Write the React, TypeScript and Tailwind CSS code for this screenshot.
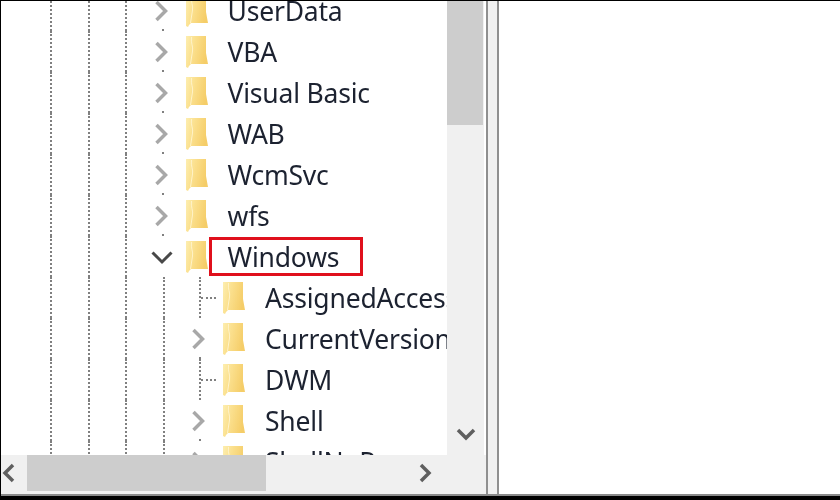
const font = "font-['Noto_Sans','Open_Sans',sans-serif]"

function Folder() {
  return (
    <svg width="24" height="34" viewBox="0 0 24 34" className="-ml-[2px] shrink-0">
      <defs>
        <linearGradient id="folderFill" x1="0" y1="0" x2="1" y2="0.3">
          <stop offset="0" stopColor="#fdeeb0" />
          <stop offset="0.4" stopColor="#fbe08e" />
          <stop offset="1" stopColor="#f5cd68" />
        </linearGradient>
      </defs>
      <path d="M1 1h20v17l2 11H6l-2 2 -1 2-2-1z" fill="url(#folderFill)" />
      <path d="M6.5 2c-1 6 2 10 1 14l-2 13" fill="none" stroke="#fff3c8" strokeWidth="1" />
    </svg>
  )
}

function Chevron({ open }: { open?: boolean }) {
  return (
    <svg width="22" height="22" viewBox="0 0 22 22" className="shrink-0 -translate-x-[1px]">
      {open ? (
        <path d="M1.500 6.500l9.500 9.500 9.500-9.500" fill="none" stroke="#484848" strokeWidth="3" />
      ) : (
        <path d="M5.500 2l9 9-9 9" fill="none" stroke="#a8a8a8" strokeWidth="3.500" />
      )}
    </svg>
  )
}

interface RowProps {
  label: string
  level: 3 | 4
  expander?: "closed" | "open"
  boxed?: boolean
}

function Row({ label, level, expander, boxed }: RowProps) {
  const guides = level === 3 ? [0, 1, 2] : [0, 1, 2, 3]
  return (
    <div className="flex h-[41px] shrink-0 items-stretch">
      <div className="w-[50px] shrink-0" />
      {guides.map((g) => (
        <div key={g} className="w-[37.5px] shrink-0 border-l-2 border-dotted border-[#808080]" />
      ))}
      <div className="relative -ml-[12px] mr-[12px] flex w-[24px] shrink-0 items-center justify-center">
        {expander ? (
          <>
            <Chevron open={expander === "open"} />
            {expander === "closed" && (
              <div className="absolute bottom-0 left-[11px] h-[2px] w-[2px] bg-[#808080]" />
            )}
          </>
        ) : (
          <>
            <div className="absolute inset-y-0 left-[11px] border-l-2 border-dotted border-[#808080]" />
            <div className="absolute left-[13px] right-[-4px] top-[20px] border-t-2 border-dotted border-[#808080]" />
          </>
        )}
      </div>
      <div className="flex items-center">
        <Folder />
      </div>
      <div className="relative ml-[19px] flex items-center whitespace-nowrap pt-[2px] text-[26.5px] tracking-[-0.2px] text-[#1c2230]">
        {label}
        {boxed && (
          <div className="absolute -left-[19px] -right-[24px] top-[1px] bottom-[1px] border-[3px] border-[#e0101c]" />
        )}
      </div>
    </div>
  )
}

export default function App() {
  return (
    <div className={`flex h-[500px] w-[840px] flex-col overflow-hidden bg-black pt-px pl-px ${font}`}>
      <div className="flex min-h-0 flex-1 bg-white blur-[0.4px]">
        <div className="flex w-[485px] shrink-0 flex-col">
          <div className="flex min-h-0 flex-1">
            <div className="min-h-0 w-[446px] shrink-0 overflow-hidden">
              <div className="-ml-px -mt-[11px] flex flex-col">
                <Row label="UserData" level={3} expander="closed" />
                <Row label="VBA" level={3} expander="closed" />
                <Row label="Visual Basic" level={3} expander="closed" />
                <Row label="WAB" level={3} expander="closed" />
                <Row label="WcmSvc" level={3} expander="closed" />
                <Row label="wfs" level={3} expander="closed" />
                <Row label="Windows" level={3} expander="open" boxed />
                <Row label="AssignedAccessConfiguration" level={4} />
                <Row label="CurrentVersion" level={4} expander="closed" />
                <Row label="DWM" level={4} />
                <Row label="Shell" level={4} expander="closed" />
                <Row label="ShellNoRoam" level={4} expander="closed" />
              </div>
            </div>
            <div className="flex w-[37px] shrink-0 flex-col bg-[#f0f0f0]">
              <div className="h-[124px] w-[36px] bg-[#cdcdcd]" />
              <div className="flex flex-1 items-end justify-center pb-[13px]">
                <svg width="20" height="14" viewBox="0 0 20 14">
                  <path d="M2 2l8 8 8-8" fill="none" stroke="#5f5f5f" strokeWidth="3.5" />
                </svg>
              </div>
            </div>
            <div className="w-[2px] shrink-0" />
          </div>
          <div className="flex h-[39px] shrink-0 items-start bg-[#f0f0f0]">
            <div className="flex h-[36px] w-[26px] shrink-0 items-center justify-start pl-[1px]">
              <svg width="14" height="20" viewBox="0 0 14 20">
                <path d="M11 2l-8 8 8 8" fill="none" stroke="#5f5f5f" strokeWidth="3.5" />
              </svg>
            </div>
            <div className="h-[36px] w-[239px] shrink-0 bg-[#cdcdcd]" />
            <div className="flex h-[36px] w-[166px] shrink-0 items-center justify-end">
              <svg width="14" height="20" viewBox="0 0 14 20">
                <path d="M3 2l8 8-8 8" fill="none" stroke="#5f5f5f" strokeWidth="3.5" />
              </svg>
            </div>
          </div>
        </div>
        <div className="w-[2px] shrink-0 bg-[#8f8f8f]" />
        <div className="w-[9px] shrink-0 bg-[#f0f0f0]" />
        <div className="w-[2px] shrink-0 bg-[#8f8f8f]" />
        <div className="min-w-0 flex-1 bg-white" />
      </div>
      <div className="h-[2px] shrink-0 bg-[#8a8a8a]" />
      <div className="h-[4px] shrink-0 bg-black" />
    </div>
  )
}
